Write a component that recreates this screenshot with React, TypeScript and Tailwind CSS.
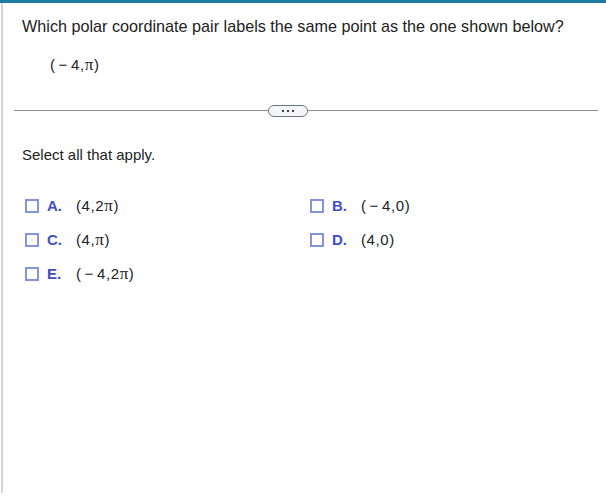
import { useState } from 'react';

const options = [
  { key: 'A', value: '(4,2π)' },
  { key: 'B', value: '(−4,0)' },
  { key: 'C', value: '(4,π)' },
  { key: 'D', value: '(4,0)' },
  { key: 'E', value: '(−4,2π)' },
];

function MathText({ text }: { text: string }) {
  // digits in sans, pi in serif like the rendered math
  return (
    <span className="text-[15px] text-[#222] tracking-[0.6px]">
      {text.split('').map((ch, i) =>
        ch === 'π' ? (
          <span key={i} className="font-['Liberation_Serif',serif] text-[17px]">
            π
          </span>
        ) : ch === '−' ? (
          <span key={i} className="mx-[3px]">−</span>
        ) : (
          <span key={i}>{ch}</span>
        )
      )}
    </span>
  );
}

function Option({ k, value, checked, onToggle }: { k: string; value: string; checked: boolean; onToggle: () => void }) {
  return (
    <label className="flex h-[34px] cursor-pointer items-center">
      <span
        onClick={onToggle}
        className={`h-[14px] w-[14px] border-2 border-[#8494dc] ${checked ? 'bg-[#8494dc]' : 'bg-white'}`}
      />
      <span className="ml-[8px] w-[29px] text-[15px] font-bold text-[#3f4fc2]">{k}.</span>
      <MathText text={value} />
    </label>
  );
}

export default function App() {
  const [checked, setChecked] = useState<Record<string, boolean>>({});
  const toggle = (k: string) => setChecked((prev) => ({ ...prev, [k]: !prev[k] }));

  return (
    <div className="h-[498px] w-[606px] overflow-hidden bg-white font-['Liberation_Sans',Arial,sans-serif]">
      <div className="h-[3px] bg-[#1c7ca5]" />
      <div className="flex h-[490px]">
        <div className="ml-[1px] w-[2px] bg-[#d3d3dc]" />
        <div className="flex-1">
          <div className="pl-[19px] pt-[13px]">
            <p className="text-[16.2px] leading-[20px] text-[#222]">
              Which polar coordinate pair labels the same point as the one shown below?
            </p>
            <div className="mt-[16px] pl-[28px]">
              <MathText text="(−4,π)" />
            </div>
          </div>

          <div className="mt-[27px] flex items-center pl-[11px] pr-[8px]">
            <div className="h-px w-[254px] bg-[#8a929a]" />
            <button className="flex h-[12px] w-[40px] items-center justify-center gap-[3px] rounded-full border border-[#6f7880] bg-[#f4f5f7]">
              <span className="h-[2px] w-[2px] bg-[#444]" />
              <span className="h-[2px] w-[2px] bg-[#444]" />
              <span className="h-[2px] w-[2px] bg-[#444]" />
            </button>
            <div className="h-px flex-1 bg-[#8a929a]" />
          </div>

          <p className="mt-[27px] pl-[19px] text-[15px] text-[#222]">Select all that apply.</p>

          <div className="mt-[23px] grid grid-cols-[285px_1fr] pl-[22px]">
            {options.map((o) => (
              <Option key={o.key} k={o.key} value={o.value} checked={!!checked[o.key]} onToggle={() => toggle(o.key)} />
            ))}
          </div>
        </div>
      </div>
    </div>
  );
}
